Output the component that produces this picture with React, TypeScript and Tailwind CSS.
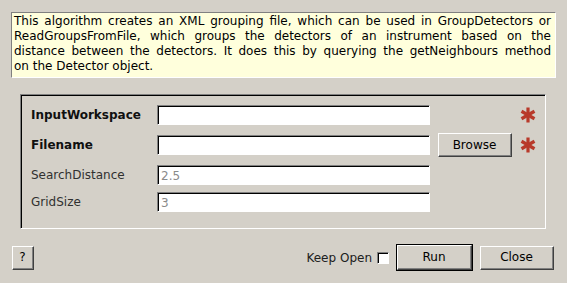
import React from 'react';

const sunken = 'border-t border-l border-t-[#808080] border-l-[#808080] border-b border-r border-b-white border-r-white';

const descLines = [
  'This algorithm creates an XML grouping file, which can be used in GroupDetectors or',
  'ReadGroupsFromFile, which groups the detectors of an instrument based on the',
  'distance between the detectors. It does this by querying the getNeighbours method',
  'on the Detector object.',
];

function Star() {
  return (
    <svg width="16" height="16" viewBox="0 0 16 16" className="shrink-0">
      <g fill="#b8392a" transform="translate(8 8)">
        <rect x="-1.6" y="-7.5" width="3.2" height="15" />
        <rect x="-1.6" y="-7.5" width="3.2" height="15" transform="rotate(60)" />
        <rect x="-1.6" y="-7.5" width="3.2" height="15" transform="rotate(120)" />
      </g>
    </svg>
  );
}

function Field({ value }: { value?: string }) {
  return (
    <div className={`w-[273px] h-[20px] ${sunken}`}>
      <div className="h-full border-t border-l border-black bg-white pl-[2px] text-[#8a8a8a] leading-[18px]">
        {value}
      </div>
    </div>
  );
}

function Button({ label, className = '' }: { label: string; className?: string }) {
  return (
    <div className={`border-t border-l border-white border-b border-r border-b-[#404040] border-r-[#404040] ${className}`}>
      <div className="h-full w-full border-b border-r border-[#808080] flex items-center justify-center text-black">
        {label}
      </div>
    </div>
  );
}

export default function App() {
  const rows = [
    { label: 'InputWorkspace', bold: true, extra: null, star: true, mt: 'mt-0' },
    { label: 'Filename', bold: true, extra: 'browse', star: true, mt: 'mt-[6px]' },
    { label: 'SearchDistance', bold: false, value: '2.5', mt: 'mt-[7px]' },
    { label: 'GridSize', bold: false, value: '3', mt: 'mt-[5px]' },
  ];

  return (
    <div
      className="w-[567px] h-[283px] bg-[#d4d0c8] text-[12px] text-black overflow-hidden"
      style={{ fontFamily: '"DejaVu Sans", Verdana, sans-serif' }}
    >
      <div className="pt-[12px] pl-[11px]">
        <div className={`w-[545px] h-[66px] ${sunken} bg-[#ffffdc] pl-[2px] pr-[4px] pt-[1px]`}>
          {descLines.map((line, i) => (
            <div
              key={i}
              className={`leading-[15px] whitespace-nowrap ${i < descLines.length - 1 ? 'text-justify [text-align-last:justify]' : ''}`}
            >
              {line}
            </div>
          ))}
        </div>
      </div>

      <div className="mt-[16px] ml-[20px] w-[526px] h-[135px] border-t border-l border-t-[#808080] border-l-[#808080] border-b border-r border-b-white border-r-white">
        <div className="h-full border-t border-l border-black pt-[7px] pl-[9px]">
          {rows.map((r) => (
            <div key={r.label} className={`flex items-center ${r.mt} ${r.label === 'SearchDistance' || r.label === 'GridSize' ? 'h-[22px]' : 'h-[24px]'}`}>
              <div className={`w-[126px] ${r.bold ? 'font-bold text-[#101010]' : 'text-[#303030]'}`}>{r.label}</div>
              <Field value={r.value} />
              {r.extra === 'browse' ? (
                <Button label="Browse" className="ml-[8px] w-[74px] h-[24px]" />
              ) : r.star ? (
                <div className="ml-[8px] w-[74px]" />
              ) : null}
              {r.star && (
                <div className="ml-[8px]">
                  <Star />
                </div>
              )}
            </div>
          ))}
        </div>
      </div>

      <div className="mt-[15px] h-[27px] flex items-center pl-[12px]">
        <Button label="?" className="w-[22px] h-[24px]" />
        <div className="ml-auto flex items-center">
          <span className="text-[#202020]">Keep Open</span>
          <div className={`ml-[5px] w-[12px] h-[12px] ${sunken}`}>
            <div className="h-full border-t border-l border-black bg-white" />
          </div>
        </div>
        <div className="ml-[7px] w-[77px] h-[27px] border border-black">
          <Button label="Run" className="w-full h-full" />
        </div>
        <Button label="Close" className="ml-[7px] mr-[13px] w-[74px] h-[24px]" />
      </div>
    </div>
  );
}
